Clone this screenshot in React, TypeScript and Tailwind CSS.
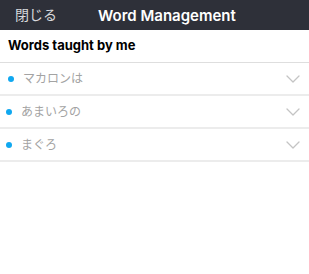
import React from 'react';

const words = [
  { text: 'マカロンは', indent: true },
  { text: 'あまいろの', indent: false },
  { text: 'まぐろ', indent: false },
];

const Chevron: React.FC = () => (
  <svg width="14" height="8" viewBox="0 0 14 8" fill="none">
    <path d="M1 1l6 6 6-6" stroke="#c4c4c4" strokeWidth="1.3" strokeLinecap="round" strokeLinejoin="round" />
  </svg>
);

const App: React.FC = () => {
  return (
    <div
      className="w-[309px] h-[274px] bg-white overflow-hidden"
      style={{ fontFamily: '"Helvetica Neue", Inter, "Noto Sans CJK JP", sans-serif' }}
    >
      <div className="h-[30px] bg-[#2e3039] flex items-center relative">
        <span className="ml-[15px] text-[14px] text-[#d8d9dc] leading-none">閉じる</span>
        <span className="absolute left-[98px] text-[15px] font-semibold text-white leading-none">Word Management</span>
      </div>
      <div className="h-[33px] flex items-center px-[8px] border-b border-[#dedede]">
        <span className="text-[13px] font-bold text-black">Words taught by me</span>
      </div>
      {words.map((w, i) => (
        <div key={i} className="h-[33px] flex items-center border-b-2 border-[#ececec]">
          <span className={`w-[6px] h-[6px] rounded-full bg-[#10a8f0] ${w.indent ? 'ml-[8px]' : 'ml-[6px]'}`} />
          <span className="ml-[9px] text-[12px] text-[#a3a3a3]">{w.text}</span>
          <div className="ml-auto mr-[9px] flex items-center">
            <Chevron />
          </div>
        </div>
      ))}
    </div>
  );
};

export default App;
